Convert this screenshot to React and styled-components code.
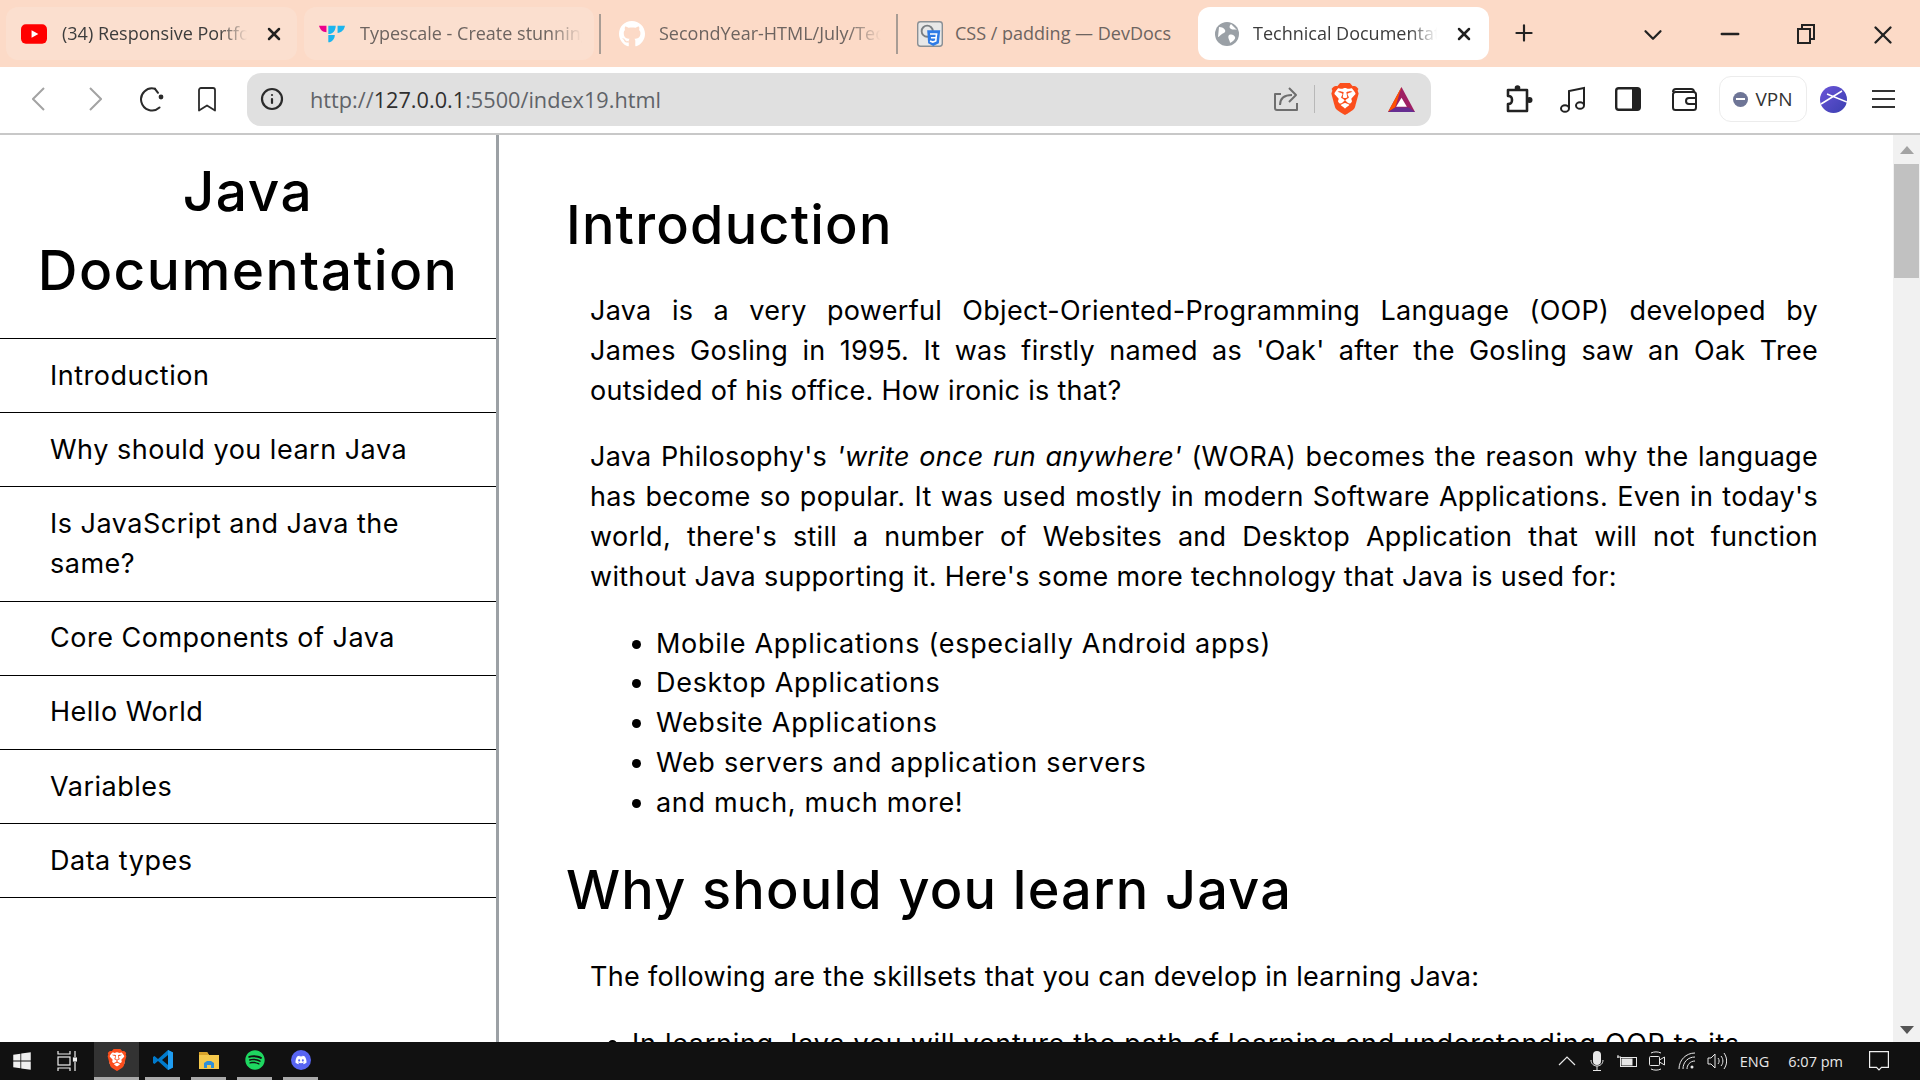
import React from 'react';
import styled, { createGlobalStyle } from 'styled-components';
import { ChevronDown, Info, Minus, Plus, X } from 'lucide-react';
import { FaDiscord, FaGithub, FaSpotify, FaWindows } from 'react-icons/fa';
import { SiBrave } from 'react-icons/si';

const bodyFont = '"Inter", "Noto Sans", sans-serif';
const chromeFont = '"Open Sans", "Noto Sans", sans-serif';

const GlobalStyle = createGlobalStyle`
  html, body { margin: 0; padding: 0; height: 100%; overflow: hidden; background: #fff; }
  #root { height: 100%; }
  * { box-sizing: border-box; }
`;

const Screen = styled.div`
  width: 1920px;
  height: 1080px;
  display: flex;
  flex-direction: column;
  overflow: hidden;
`;

/* tab strip */
const TabStrip = styled.div`
  height: 67px;
  flex: none;
  background: #fcdac7;
  display: flex;
  align-items: flex-start;
  padding: 7px 0 0 6px;
  font-family: ${chromeFont};
`;

const Tab = styled.div`
  width: ${(p) => p.$width}px;
  margin-right: ${(p) => p.$gap || 0}px;
  height: 53px;
  flex: none;
  border-radius: 12px;
  background: ${(p) => (p.$active ? '#fff' : p.$hover ? '#fbdfcf' : 'transparent')};
  display: flex;
  align-items: center;
  padding-left: ${(p) => p.$pad}px;
`;

const TabIcon = styled.span`
  width: 26px;
  height: 26px;
  flex: none;
  display: flex;
  align-items: center;
  justify-content: center;
`;

const TabTitle = styled.span`
  width: ${(p) => p.$width}px;
  margin-left: ${(p) => p.$offset}px;
  padding-bottom: 2px;
  flex: none;
  font-size: 18px;
  white-space: nowrap;
  overflow: hidden;
  color: ${(p) => (p.$dark ? '#3c3c3c' : '#6d6460')};
  mask-image: ${(p) => (p.$fade ? 'linear-gradient(to right, #000 85%, transparent)' : 'none')};
`;

const TabClose = styled.span`
  display: flex;
  margin-left: 17px;
  color: #222;
`;

const TabDivider = styled.span`
  width: 2px;
  height: 40px;
  flex: none;
  margin-top: 7px;
  background: #a89c94;
`;

const StripButton = styled.span`
  display: flex;
  flex: none;
  margin-top: ${(p) => p.$top || 13}px;
  margin-left: ${(p) => p.$left}px;
  color: #222;
`;

/* toolbar */
const Toolbar = styled.div`
  height: 68px;
  flex: none;
  background: #fff;
  border-bottom: 2px solid #c8c8c8;
  display: flex;
  align-items: center;
  padding: 0 0 2px 32px;
`;

const NavButton = styled.span`
  display: flex;
  flex: none;
  margin-left: ${(p) => p.$left || 0}px;
  color: #2b2b2b;
`;

const Omnibox = styled.div`
  width: 1184px;
  height: 53px;
  margin-left: 31px;
  flex: none;
  border-radius: 14px;
  background: #e0e0e0;
  display: flex;
  align-items: center;
  padding-left: 13px;
`;

const Url = styled.span`
  width: 963px;
  margin-left: 26px;
  flex: none;
  font-family: ${chromeFont};
  font-size: 21.7px;
  color: #5f6368;
  b { font-weight: 400; color: #2f2f2f; }
`;

const OmniDivider = styled.span`
  width: 1px;
  height: 28px;
  margin: 0 14px 0 15px;
  background: #b8b8b8;
`;

const VpnPill = styled.div`
  width: 88px;
  height: 46px;
  margin-left: 22px;
  flex: none;
  border: 1.5px solid #ececec;
  border-radius: 12px;
  display: flex;
  align-items: center;
  justify-content: center;
  gap: 7px;
  font-family: ${chromeFont};
  font-size: 19px;
  color: #333;
`;

const VpnDot = styled.span`
  width: 15px;
  height: 15px;
  border-radius: 50%;
  background: #6e7596;
  display: flex;
  align-items: center;
  justify-content: center;
  &::after {
    content: '';
    width: 9px;
    height: 2px;
    background: #fff;
  }
`;

/* page */
const Viewport = styled.div`
  flex: 1;
  min-height: 0;
  display: flex;
  overflow: hidden;
  color: #000;
  font-family: ${bodyFont};
`;

const Sidebar = styled.nav`
  width: 499px;
  flex: none;
  border-right: 3px solid #9ca1a5;
`;

const SideTitle = styled.h1`
  margin: 0;
  height: 204px;
  padding-top: 17px;
  font-size: 55px;
  letter-spacing: 1.5px;
  line-height: 79px;
  font-weight: 500;
  text-align: center;
  border-bottom: 1px solid #000;
`;

const SideList = styled.ul`
  list-style: none;
  margin: 0;
  padding: 0;
`;

const SideItem = styled.li`
  padding: 16.6px 30px 16.6px 50px;
  font-size: 27px;
  letter-spacing: 0.5px;
  line-height: 40px;
  border-bottom: 1px solid #000;
`;

const Main = styled.main`
  flex: 1;
  min-width: 0;
  padding: 54px 75px 0 67px;
`;

const Heading = styled.h2`
  margin: ${(p) => (p.$next ? '31px 0 31px' : '0 0 30px')};
  font-size: 54px;
  letter-spacing: 1.2px;
  line-height: 72px;
  font-weight: 500;
`;

const Para = styled.p`
  margin: 0 0 ${(p) => (p.$lead ? 28 : 27)}px 24px;
  font-size: 27px;
  letter-spacing: 0.3px;
  line-height: 39.8px;
  text-align: justify;
`;

const Bullets = styled.ul`
  margin: 0 0 0 ${(p) => (p.$flush ? 0 : 24)}px;
  padding: 0 0 0 66px;
  font-size: 27px;
  letter-spacing: 0.7px;
  line-height: 39.8px;
`;

const Scrollbar = styled.div`
  width: 27px;
  flex: none;
  background: #f1f1f1;
  display: flex;
  flex-direction: column;
  align-items: center;
`;

const ScrollArrow = styled.span`
  width: 0;
  height: 0;
  border-left: 7px solid transparent;
  border-right: 7px solid transparent;
  ${(p) => (p.$down ? 'border-top: 8px solid #555; margin-top: auto; margin-bottom: 8px;' : 'border-bottom: 8px solid #a3a3a3; margin-top: 11px;')}
`;

const ScrollThumb = styled.span`
  width: 25px;
  height: 114px;
  margin-top: 10px;
  background: #c1c1c1;
`;

/* taskbar */
const Taskbar = styled.div`
  height: 38px;
  flex: none;
  background: #111;
  display: flex;
  align-items: center;
  color: #f0f0f0;
`;

const TaskSlot = styled.span`
  width: ${(p) => p.$width}px;
  height: 100%;
  flex: none;
  display: flex;
  align-items: center;
  justify-content: center;
  margin-right: ${(p) => p.$gap || 0}px;
  background: ${(p) => (p.$active ? '#333' : 'transparent')};
  border-bottom: ${(p) => (p.$open ? '3px solid #aaa' : 'none')};
`;

const Tray = styled.div`
  margin-left: auto;
  height: 100%;
  display: flex;
  align-items: center;
  padding-right: 26px;
  font-family: ${chromeFont};
  font-size: 14.5px;
  color: #e8e8e8;
`;

const TrayIcon = styled.span`
  display: flex;
  width: 30px;
  justify-content: center;
`;

const TrayText = styled.span`
  margin-left: ${(p) => p.$left}px;
  margin-right: ${(p) => p.$right}px;
`;

const YouTubeIcon = () => (
  <svg width="27" height="20" viewBox="0 0 27 20">
    <rect width="27" height="20" rx="5" fill="#f00" />
    <path d="M11 6l7 4-7 4z" fill="#fff" />
  </svg>
);

const TypescaleIcon = () => (
  <svg width="27" height="18" viewBox="0 0 28 18">
    <path d="M0 0h8v7C4 7 1 4 0 0z" fill="#ec008c" />
    <path d="M10 0h8c0 5-3 9-8 9z" fill="#1bb5ee" />
    <path d="M20 0h8c-1 5-4 7-8 8z" fill="#1bb5ee" />
    <path d="M10 10h7c0 4-3 8-7 8z" fill="#1bb5ee" />
  </svg>
);

const CssIcon = () => (
  <svg width="28" height="28" viewBox="0 0 28 28">
    <rect x=".75" y=".75" width="26.5" height="26.5" rx="3" fill="#e8e8e8" stroke="#8a8f94" strokeWidth="1.5" />
    <circle cx="11" cy="11" r="6" fill="none" stroke="#7a7f84" strokeWidth="2" />
    <path d="M11 10h14l-1.500 14-6 3-5.500-3z" fill="#2f7be6" />
    <path d="M14 14h8M21 14l-.8 7.500-3.200 1.200-3-1.200M15 18h6" fill="none" stroke="#fff" strokeWidth="1.7" />
  </svg>
);

const GlobeIcon = () => (
  <svg width="26" height="26" viewBox="0 0 26 26">
    <circle cx="13" cy="13" r="12" fill="#9aa0a6" />
    <path d="M5 6c3 0 5 1 6 3s-1 3-3 4-3 3-4 3M17 3c-2 2-2 4 0 5s4 0 6 1M15 14c3-1 5 0 6 2s-3 5-5 6c0-3-3-5-1-8z" fill="#fff" />
  </svg>
);

const BraveIcon = ({ size }) => (
  <svg width={size} height={size} viewBox="0 0 24 24">
    <path d="M5 3h14l2 4-1 9-8 7-8-7-1-9z" fill="#fff" />
    <SiBrave x="0" y="0" size="24" color="#fb4e1c" />
  </svg>
);

const BatIcon = () => (
  <svg width="29" height="27" viewBox="0 0 32 30">
    <path d="M16 1L1 29h30z" fill="#9e1f63" />
    <path d="M16 1L1 29l8-5z" fill="#ff5000" />
    <path d="M1 29h30l-7-5H9z" fill="#662d91" />
    <path d="M16 13l-6 10h12z" fill="#fff" />
  </svg>
);

const BackIcon = ({ flip }) => (
  <svg width="14" height="24" viewBox="0 0 14 24" fill="none" stroke="#a3a3a3" strokeWidth="2">
    <path d={flip ? 'M2 1l11 11L2 23' : 'M12 1L1 12l11 11'} />
  </svg>
);

const ReloadIcon = () => (
  <svg width="25" height="25" viewBox="0 0 25 25" fill="none" stroke="#2b2b2b" strokeWidth="2" strokeLinecap="round">
    <path d="M20.500 20.500A11 11 0 1 1 16 1.800" />
    <path d="M16 1.800l3 4" />
    <circle cx="22" cy="10" r="2.400" fill="#2b2b2b" stroke="none" />
  </svg>
);

const BookmarkIcon = () => (
  <svg width="18" height="25" viewBox="0 0 18 25" fill="none" stroke="#2b2b2b" strokeWidth="1.800" strokeLinejoin="round">
    <path d="M1 3a2 2 0 0 1 2-2h12a2 2 0 0 1 2 2v20.500l-8-5-8 5z" />
  </svg>
);

const ShareIcon = () => (
  <svg width="26" height="26" viewBox="0 0 26 26" fill="none" stroke="#6e6e6e" strokeWidth="2">
    <path d="M8 8H2v14a2 2 0 0 0 2 2h20v-7" strokeLinejoin="round" />
    <path d="M7 19c0-7 5-10 12-10M16 2l7 7-7 7" strokeLinejoin="round" />
  </svg>
);

const PuzzleIcon = () => (
  <svg width="28" height="28" viewBox="0 0 28 28" fill="#222">
    <path d="M3 5h19v21H3v-7c3.500 0 4-1.500 4-4s-.5-4-4-4z" fill="none" stroke="#222" strokeWidth="2.600" strokeLinejoin="round" />
    <circle cx="12.500" cy="3" r="2.800" />
    <circle cx="24.500" cy="15" r="3" />
  </svg>
);

const MusicIcon = () => (
  <svg width="25" height="27" viewBox="0 0 25 27" fill="none" stroke="#222" strokeWidth="2">
    <path d="M9 22V5l15-3v17" />
    <ellipse cx="5" cy="22.500" rx="4" ry="3.300" />
    <ellipse cx="20" cy="19.500" rx="4" ry="3.300" />
  </svg>
);

const SidePanelIcon = () => (
  <svg width="26" height="24" viewBox="0 0 26 24">
    <rect x="1.200" y="1.200" width="23.600" height="21.600" rx="2.500" fill="none" stroke="#222" strokeWidth="2.400" />
    <rect x="17" y="1" width="8" height="22" fill="#222" />
  </svg>
);

const WalletIcon = () => (
  <svg width="25" height="24" viewBox="0 0 25 24" fill="none" stroke="#222" strokeWidth="2">
    <path d="M1 5a3 3 0 0 1 3-3h15a3 3 0 0 1 3 3" />
    <rect x="1" y="5" width="23" height="18" rx="2.500" />
    <path d="M24 11h-7a2.500 2.500 0 0 0 0 6h7" />
  </svg>
);

const ProfileIcon = () => (
  <svg width="27" height="27" viewBox="0 0 27 27">
    <defs>
      <linearGradient id="profile" x1="0" y1="0" x2="1" y2="1">
        <stop offset="0" stopColor="#6a54d8" />
        <stop offset="1" stopColor="#3b3fb0" />
      </linearGradient>
    </defs>
    <circle cx="13.500" cy="13.500" r="13.500" fill="url(#profile)" />
    <path d="M1 18L22 5M7 8l20 8" stroke="#fff" strokeWidth="1.500" fill="none" />
  </svg>
);

const BurgerIcon = () => (
  <svg width="23" height="20" viewBox="0 0 23 20" stroke="#333" strokeWidth="1.800">
    <path d="M0 2h23M0 10h23M0 18h23" />
  </svg>
);

const TaskViewIcon = () => (
  <svg width="20" height="20" viewBox="0 0 20 20" fill="none" stroke="#f0f0f0" strokeWidth="1.2">
    <path d="M1 0v3h12V0M1 20v-3h12v3" />
    <rect x="1" y="6" width="12" height="8" />
    <path d="M18 0v6M18 11v9" />
    <rect x="16.500" y="7" width="3" height="3" fill="#f0f0f0" />
  </svg>
);

const VscodeIcon = () => (
  <svg width="22" height="22" viewBox="0 0 22 22">
    <path d="M16 1l5 2.500v15L16 21 6 12l-3.500 3L1 14v-6l1.500-1L6 10z" fill="#007acc" />
    <path d="M16 1l5 2.500v15L16 21z" fill="#1f9cf0" />
    <path d="M16 6l-6 5 6 5z" fill="#111" />
  </svg>
);

const FolderIcon = () => (
  <svg width="20" height="18" viewBox="0 0 20 18">
    <path d="M0 1h8l2 3h10v14H0z" fill="#f5c94c" />
    <path d="M0 1h8l2 3H0z" fill="#d9a32a" />
    <path d="M5 17v-5l3-2h4l3 2v5h-3v-3H8v3z" fill="#2f8fd8" />
  </svg>
);

const MicIcon = () => (
  <svg width="14" height="20" viewBox="0 0 14 20" fill="#e8e8e8">
    <rect x="3" y="0" width="8" height="14" rx="4" />
    <path d="M1 9c0 8 12 8 12 0M7 15v4M3 19.500h8" fill="none" stroke="#e8e8e8" />
  </svg>
);

const BatteryIcon = () => (
  <svg width="20" height="14" viewBox="0 0 20 14" fill="none" stroke="#e8e8e8">
    <rect x="3.500" y="3.500" width="16" height="9" />
    <rect x="5" y="5" width="10" height="6" fill="#e8e8e8" />
    <path d="M0 3h4M1 1v3" />
  </svg>
);

const CameraIcon = () => (
  <svg width="16" height="20" viewBox="0 0 16 20" fill="none" stroke="#e8e8e8">
    <rect x=".500" y="5.500" width="10" height="9" rx="1" />
    <path d="M10.500 9l5-3v8l-5-3M2 2c3-1.500 7-1.500 10 0M2 18c3 1.500 7 1.500 10 0" />
  </svg>
);

const WifiIcon = () => (
  <svg width="18" height="18" viewBox="0 0 18 18" fill="none" stroke="#e8e8e8">
    <path d="M1 17C1 8 8 1 17 1M5 17c0-7 5-12 12-12M9 17c0-4 3-8 8-8" />
    <circle cx="14" cy="15" r="1.500" fill="#e8e8e8" stroke="none" />
  </svg>
);

const SpeakerIcon = () => (
  <svg width="20" height="18" viewBox="0 0 20 18" fill="none" stroke="#e8e8e8">
    <path d="M1 6h3l4-4v14l-4-4H1zM11 6c1.500 2 1.500 4 0 6M14 4c2.500 3 2.500 7 0 10M17 1c3.500 5 3.500 11 0 16" />
  </svg>
);

const CaretIcon = () => (
  <svg width="18" height="10" viewBox="0 0 18 10" fill="none" stroke="#e8e8e8" strokeWidth="1.2">
    <path d="M1 9l8-8 8 8" />
  </svg>
);

const NoticeIcon = () => (
  <svg width="20" height="20" viewBox="0 0 20 20" fill="none" stroke="#f0f0f0" strokeWidth="1.2">
    <path d="M.6.600h18.800v15.800h-6.900L10 19l-2.500-2.600H.6z" />
  </svg>
);

const RestoreIcon = () => (
  <svg width="18" height="20" viewBox="0 0 18 20" fill="none" stroke="#222" strokeWidth="2">
    <rect x="1" y="5" width="12" height="14" />
    <path d="M5 5V1h12v14h-4" />
  </svg>
);

const navItems = [
  'Introduction',
  'Why should you learn Java',
  'Is JavaScript and Java the same?',
  'Core Components of Java',
  'Hello World',
  'Variables',
  'Data types',
];

const uses = [
  'Mobile Applications (especially Android apps)',
  'Desktop Applications',
  'Website Applications',
  'Web servers and application servers',
  'and much, much more!',
];

const App = () => {
  return (
    <Screen>
      <GlobalStyle />
      <TabStrip>
        <Tab $width={291} $gap={7} $hover $pad={15}>
          <TabIcon><YouTubeIcon /></TabIcon>
          <TabTitle $dark $fade $width={185} $offset={15}>(34) Responsive Portfolio</TabTitle>
          <TabClose><X size={20} strokeWidth={3} /></TabClose>
        </Tab>
        <Tab $width={290} $gap={5} $hover $pad={15}>
          <TabIcon><TypescaleIcon /></TabIcon>
          <TabTitle $fade $width={222} $offset={15}>Typescale - Create stunning typography</TabTitle>
        </Tab>
        <TabDivider />
        <Tab $width={295} $pad={18}>
          <TabIcon><FaGithub size={28} color="#fff" /></TabIcon>
          <TabTitle $fade $width={222} $offset={14}>SecondYear-HTML/July/Technical</TabTitle>
        </Tab>
        <TabDivider />
        <Tab $width={300} $pad={19}>
          <TabIcon><CssIcon /></TabIcon>
          <TabTitle $width={225} $offset={12}>CSS / padding — DevDocs</TabTitle>
        </Tab>
        <Tab $active $width={291} $pad={16}>
          <TabIcon><GlobeIcon /></TabIcon>
          <TabTitle $dark $fade $width={184} $offset={13}>Technical Documentation</TabTitle>
          <TabClose><X size={20} strokeWidth={3} /></TabClose>
        </Tab>
        <StripButton $left={22}><Plus size={26} strokeWidth={2} /></StripButton>
        <StripButton $left={101}><ChevronDown size={30} strokeWidth={1.8} /></StripButton>
        <StripButton $left={48}><Minus size={28} strokeWidth={2.2} /></StripButton>
        <StripButton $left={53} $top={17}><RestoreIcon /></StripButton>
        <StripButton $left={53}><X size={30} strokeWidth={1.9} /></StripButton>
      </TabStrip>

      <Toolbar>
        <BackIcon />
        <NavButton $left={42}><BackIcon flip /></NavButton>
        <NavButton $left={37}><ReloadIcon /></NavButton>
        <NavButton $left={34}><BookmarkIcon /></NavButton>
        <Omnibox>
          <NavButton><Info size={24} strokeWidth={2.2} /></NavButton>
          <Url>http://<b>127.0.0.1</b>:5500/index19.html</Url>
          <ShareIcon />
          <OmniDivider />
          <BraveIcon size={32} />
          <NavButton $left={26}><BatIcon /></NavButton>
        </Omnibox>
        <NavButton $left={74}><PuzzleIcon /></NavButton>
        <NavButton $left={27}><MusicIcon /></NavButton>
        <NavButton $left={30}><SidePanelIcon /></NavButton>
        <NavButton $left={31}><WalletIcon /></NavButton>
        <VpnPill><VpnDot />VPN</VpnPill>
        <NavButton $left={13}><ProfileIcon /></NavButton>
        <NavButton $left={25}><BurgerIcon /></NavButton>
      </Toolbar>

      <Viewport>
        <Sidebar>
          <SideTitle>Java Documentation</SideTitle>
          <SideList>
            {navItems.map((item) => (
              <SideItem key={item}>{item}</SideItem>
            ))}
          </SideList>
        </Sidebar>
        <Main>
          <Heading>Introduction</Heading>
          <Para>
            Java is a very powerful Object-Oriented-Programming Language (OOP) developed by James{'\u00a0'}Gosling
            in 1995. It was firstly named as 'Oak' after the Gosling saw an Oak Tree
            outsided{'\u00a0'}of his office. How ironic is that?
          </Para>
          <Para>
            Java Philosophy's <em>'write once run anywhere'</em> (WORA) becomes the reason why the
            language has become so popular. It was used mostly in modern Software Applications. Even
            in today's world, there's still a number of Websites and Desktop Application that will
            not function without Java supporting it. Here's some more technology that Java is used
            for:
          </Para>
          <Bullets>
            {uses.map((use) => (
              <li key={use}>{use}</li>
            ))}
          </Bullets>
          <Heading $next>Why should you learn Java</Heading>
          <Para $lead>The following are the skillsets that you can develop in learning Java:</Para>
          <Bullets $flush>
            <li>In learning Java you will venture the path of learning and understanding OOP to its</li>
          </Bullets>
        </Main>
        <Scrollbar>
          <ScrollArrow />
          <ScrollThumb />
          <ScrollArrow $down />
        </Scrollbar>
      </Viewport>

      <Taskbar>
        <TaskSlot $width={44}><FaWindows size={20} /></TaskSlot>
        <TaskSlot $width={46} $gap={4}><TaskViewIcon /></TaskSlot>
        <TaskSlot $width={45} $gap={6} $active $open><BraveIcon size={22} /></TaskSlot>
        <TaskSlot $width={35} $gap={11} $open><VscodeIcon /></TaskSlot>
        <TaskSlot $width={35} $gap={11} $open><FolderIcon /></TaskSlot>
        <TaskSlot $width={35} $gap={11} $open><FaSpotify size={20} color="#1ed760" /></TaskSlot>
        <TaskSlot $width={35} $open>
          <svg width="20" height="20" viewBox="0 0 20 20">
            <circle cx="10" cy="10" r="10" fill="#5865f2" />
            <FaDiscord x="4" y="4" size="12" color="#fff" />
          </svg>
        </TaskSlot>
        <Tray>
          <TrayIcon><CaretIcon /></TrayIcon>
          <TrayIcon><MicIcon /></TrayIcon>
          <TrayIcon><BatteryIcon /></TrayIcon>
          <TrayIcon><CameraIcon /></TrayIcon>
          <TrayIcon><WifiIcon /></TrayIcon>
          <TrayIcon><SpeakerIcon /></TrayIcon>
          <TrayText $left={8} $right={19}>ENG</TrayText>
          <TrayText $left={0} $right={21}>6:07 pm</TrayText>
          <TrayIcon><NoticeIcon /></TrayIcon>
        </Tray>
      </Taskbar>
    </Screen>
  );
};

export default App;
